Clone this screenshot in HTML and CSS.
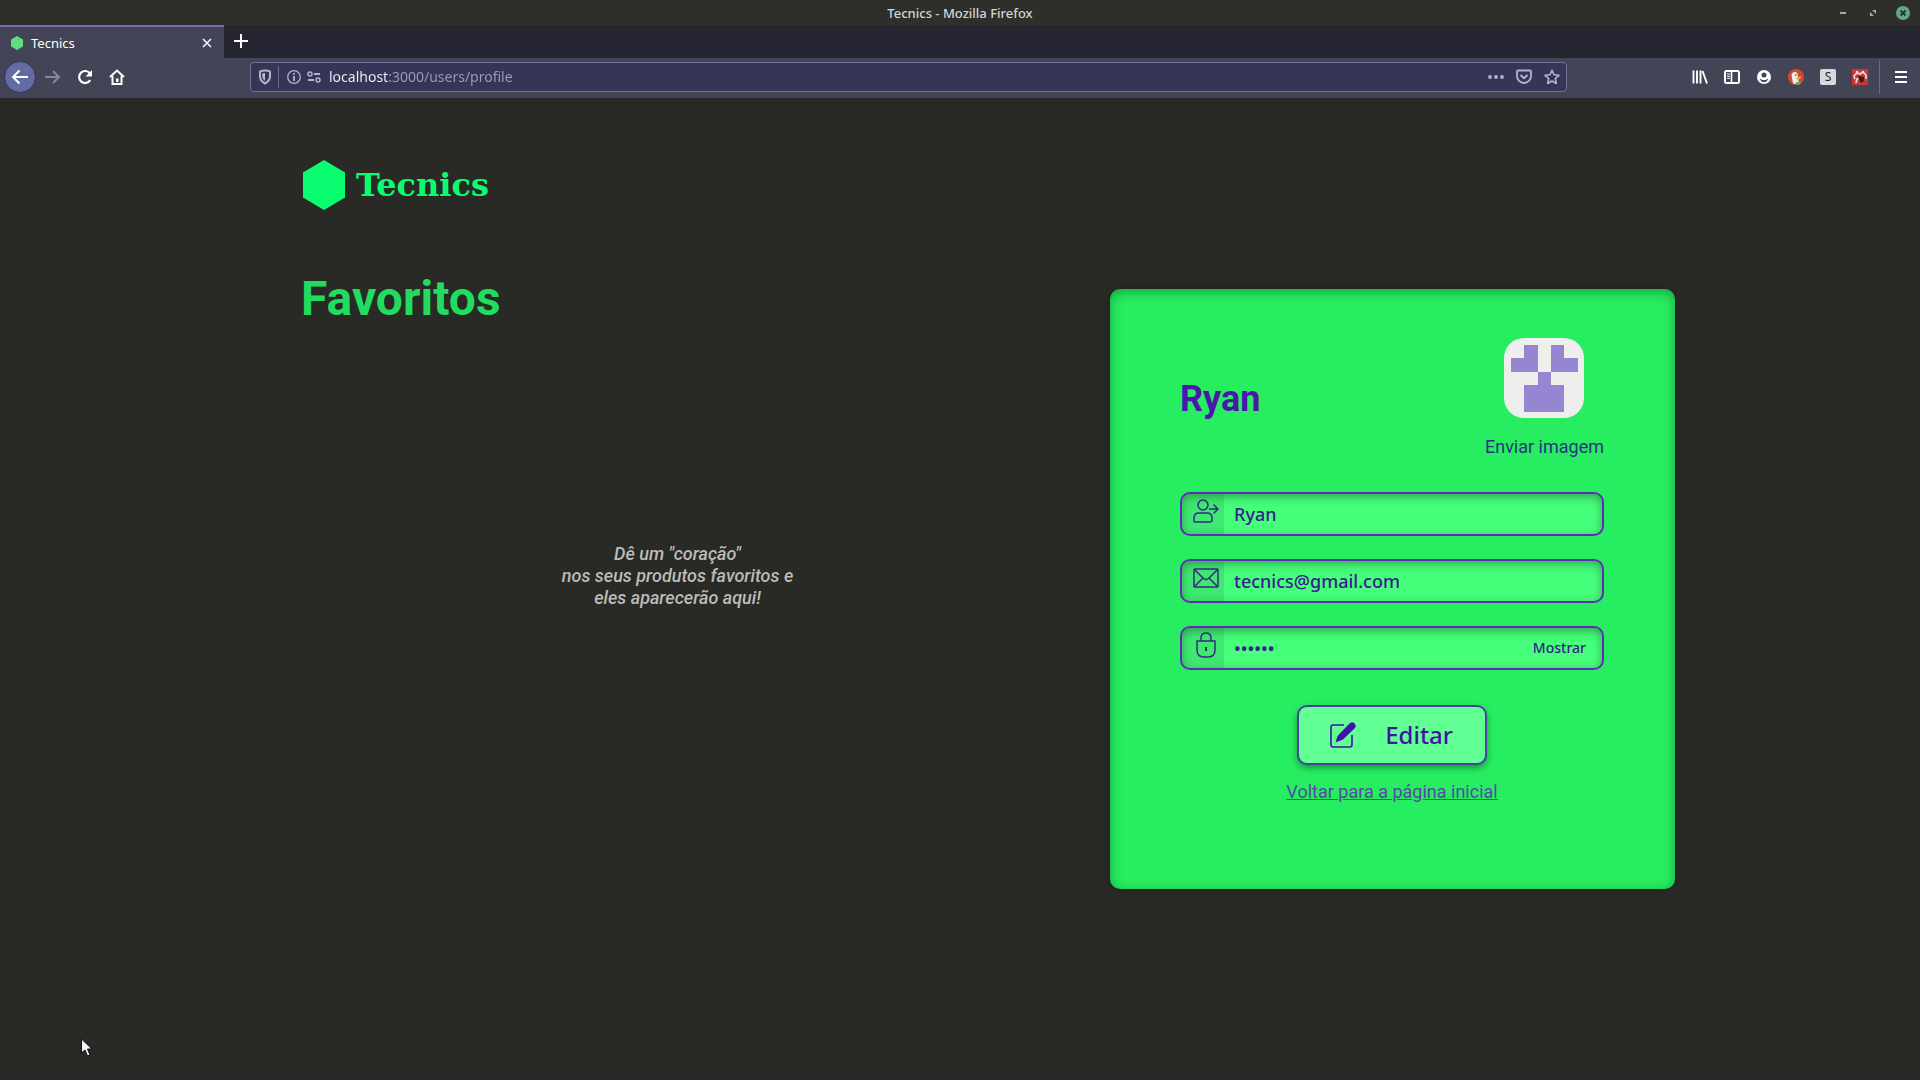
FILE: index.html
```html
<!DOCTYPE html>
<html lang="pt-BR">
<head>
<meta charset="utf-8">
<meta name="viewport" content="width=device-width, initial-scale=1">
<title>Tecnics</title>
<link rel="stylesheet" href="styles.css">
</head>
<body>
<div class="titlebar">
  <span class="window-title">Tecnics - Mozilla Firefox</span>
  <div class="window-buttons">
    <button type="button" aria-label="Minimizar"><svg width="14" height="14" viewBox="0 0 14 14"><path d="M4 7h6" stroke="#a9a9a4" stroke-width="2"/></svg></button>
    <button type="button" aria-label="Restaurar"><svg width="14" height="14" viewBox="0 0 14 14"><path d="M6 4h4v4zM4 6v4h4z" fill="#a9a9a4"/></svg></button>
    <button type="button" aria-label="Fechar janela"><svg width="14" height="14" viewBox="0 0 14 14"><circle cx="7" cy="7" r="7" fill="#5fa88c"/><path d="M4.500 4.500l5 5m0-5l-5 5" stroke="#26332d" stroke-width="1.800"/></svg></button>
  </div>
</div>
<div class="tabs">
  <div class="tab">
    <svg width="12" height="14" viewBox="0 0 12 14"><path d="M6 0l6 3.500v7L6 14 0 10.500v-7z" fill="#5fdc7f"/></svg>
    <span class="tab-title">Tecnics</span>
    <button type="button" aria-label="Fechar aba"><svg width="12" height="12" viewBox="0 0 12 12"><path d="M2 2l8 8m0-8l-8 8" stroke="#f0f0f5" stroke-width="1.700"/></svg></button>
  </div>
  <button class="new-tab" type="button" aria-label="Nova aba"><svg width="14" height="14" viewBox="0 0 14 14"><path d="M7 0v14M0 7h14" stroke="#fff" stroke-width="2"/></svg></button>
</div>
<nav class="toolbar">
  <div class="history">
    <button class="back" type="button" aria-label="Voltar"><svg width="18" height="16" viewBox="0 0 18 16"><path d="M17 8H2.500M8.500 1.500L2 8l6.500 6.500" fill="none" stroke="#fff" stroke-width="2"/></svg></button>
    <button type="button" aria-label="Avançar"><svg width="16" height="16" viewBox="0 0 16 16"><path d="M0 8h14M8 2l6 6-6 6" fill="none" stroke="#85869b" stroke-width="2"/></svg></button>
    <button type="button" aria-label="Recarregar"><svg width="16" height="16" viewBox="0 0 16 16"><path d="M13.200 11.200A6 6 0 1 1 13 4.500" fill="none" stroke="#fff" stroke-width="2.200"/><path d="M15 1v6.500H8.500z" fill="#fff"/></svg></button>
    <button type="button" aria-label="Página inicial"><svg width="16" height="16" viewBox="0 0 16 16"><path d="M1 8l7-6.500L15 8M3.500 7v8h9V7" fill="none" stroke="#fff" stroke-width="2"/><path d="M7 9.500h2.500V13H7z" fill="#fff"/></svg></button>
  </div>
  <div class="urlbar">
    <svg width="14" height="16" viewBox="0 0 14 16"><path d="M7 1.500c2 0 4 .4 5 1v4.500c0 3.500-2 6-5 7.500-3-1.500-5-4-5-7.500V2.500c1-.6 3-1 5-1z" fill="none" stroke="#b4b4cb" stroke-width="2"/><path d="M7 4v8c-1.500-1-2.800-3-2.800-5V4.500z" fill="#b4b4cb"/></svg>
    <span class="divider"></span>
    <svg width="14" height="14" viewBox="0 0 14 14"><circle cx="7" cy="7" r="6.300" fill="none" stroke="#b4b4cb" stroke-width="1.300"/><path d="M7 6v5M7 3v1.800" stroke="#b4b4cb" stroke-width="1.800"/></svg>
    <svg width="14" height="12" viewBox="0 0 14 12"><circle cx="3" cy="3" r="2" fill="none" stroke="#b4b4cb" stroke-width="1.500"/><path d="M7 3h6M1 9h6" stroke="#b4b4cb" stroke-width="1.800"/><circle cx="11" cy="9" r="2" fill="none" stroke="#b4b4cb" stroke-width="1.500"/></svg>
    <input class="url" type="text" value="localhost:3000/users/profile" aria-label="Endereço">
    <div class="page-actions">
      <svg width="16" height="16" viewBox="0 0 16 16"><g fill="#b4b4cb"><circle cx="2" cy="8" r="1.900"/><circle cx="8" cy="8" r="1.900"/><circle cx="14" cy="8" r="1.900"/></g></svg>
      <svg width="16" height="16" viewBox="0 0 16 16"><path d="M2 1.500h12q1 0 1 1V7a7 7 0 0 1-14 0V2.500q0-1 1-1z" fill="none" stroke="#b4b4cb" stroke-width="1.800"/><path d="M4.500 6L8 9.200 11.500 6" fill="none" stroke="#b4b4cb" stroke-width="2"/></svg>
      <svg width="16" height="16" viewBox="0 0 16 16"><path d="M8 1.300l2 4.500 5 .5-3.700 3.300 1 4.900L8 12l-4.300 2.500 1-4.900L1 6.300l5-.5z" fill="none" stroke="#b4b4cb" stroke-width="1.600" stroke-linejoin="round"/></svg>
    </div>
  </div>
  <div class="addons">
    <svg width="16" height="16" viewBox="0 0 16 16"><path d="M1.500 1.500v13M5 1.500v13M8.500 1.500v13M10.500 2l4.500 12.500" stroke="#fff" stroke-width="1.900" fill="none"/></svg>
    <svg width="16" height="16" viewBox="0 0 16 16"><rect x="1" y="2" width="14" height="12" rx="1.500" fill="none" stroke="#fff" stroke-width="2"/><path d="M7.500 2v12" stroke="#fff" stroke-width="1.600"/><path d="M3 5h3M3 7.200h3M3 9.400h3" stroke="#fff"/></svg>
    <svg width="16" height="16" viewBox="0 0 16 16"><circle cx="8" cy="8" r="7" fill="#fff"/><circle cx="8" cy="6" r="2.500" fill="#434456"/><path d="M3.500 9.200q4.500 4 9 0-1.500 4-4.500 4t-4.500-4z" fill="#434456"/></svg>
    <svg width="16" height="16" viewBox="0 0 16 16"><circle cx="8" cy="8" r="8" fill="#cf4a31"/><path d="M5 14.500L3.500 6C4 2.500 8 2 9.500 4.500L10 8l1 7z" fill="#efece8"/><circle cx="7.800" cy="6" r=".8" fill="#333"/><path d="M8.500 8.200L13 7.500v1.200L9.500 10l3 .8-3.500.6z" fill="#f1b432"/><path d="M8 13l5 .5-1 2-4 .4z" fill="#63ad4c"/></svg>
    <span class="addon-s">S</span>
    <svg width="16" height="16" viewBox="0 0 16 16"><rect width="16" height="16" fill="#c93636"/><path d="M3 10l-1-3 3-3 3 1 3-2 3 3v4M4 14l1-4 4-1" fill="none" stroke="#f3dede" stroke-width="1.600"/><path d="M6 7l6 1v4l-3 2-2-3z" fill="#3c1b22"/><circle cx="5" cy="3" r="1.300" fill="#f3dede"/><circle cx="11" cy="3" r="1.300" fill="#f3dede"/></svg>
  </div>
  <button class="menu" type="button" aria-label="Menu"><svg width="12" height="14" viewBox="0 0 12 14"><path d="M0 2h12M0 7h12M0 12h12" stroke="#fff" stroke-width="2"/></svg></button>
</nav>

<main class="page">
  <header>
    <a class="brand" href="#">
      <svg width="42" height="50" viewBox="0 0 42 50"><path d="M21 0l21 12.500v25L21 50 0 37.500v-25z" fill="#0afc71"/></svg>
      <span>Tecnics</span>
    </a>
  </header>
  <div class="columns">
    <section class="favorites">
      <h1>Favoritos</h1>
      <p>Dê um "coração"<br>nos seus produtos favoritos e<br>eles aparecerão aqui!</p>
    </section>
    <form class="card">
      <div class="profile">
        <h2>Ryan</h2>
        <div class="avatar">
          <svg width="80" height="80" viewBox="0 0 80 80"><rect width="80" height="80" rx="20" fill="#eeeeed"/><path d="M20 7h14v27H7V20h13zM47 7h13v13h14v14H47zM34 34h13v13h13v27H20V47h14z" fill="#9686d1"/></svg>
          <button type="button">Enviar imagem</button>
        </div>
      </div>
      <div class="fields">
        <label class="field">
          <span class="field-icon"><svg width="26" height="26" viewBox="0 0 26 26"><circle cx="10" cy="7" r="5"/><path d="M1 24v-4q0-5 5-5h8q5 0 5 5v2q0 2-2 2H1M16 11h9M20.500 6.500L25 11l-4.500 4.500"/></svg></span>
          <input type="text" value="Ryan" aria-label="Nome">
        </label>
        <label class="field">
          <span class="field-icon"><svg width="26" height="26" viewBox="0 0 26 26"><rect x="1" y="4" width="24" height="18" rx="1"/><path d="M1 4l9 9q3 3 6 0l9-9M1 22l9-9m15 9l-9-9"/></svg></span>
          <input type="email" value="tecnics@gmail.com" aria-label="E-mail">
        </label>
        <label class="field">
          <span class="field-icon"><svg width="26" height="26" viewBox="0 0 26 26"><path d="M4 9h18v9q0 7-7 7h-4q-7 0-7-7zM8 9V6q0-5 5-5t5 5v3"/><path d="M13 15v4" stroke-width="2"/></svg></span>
          <input type="password" value="secret" aria-label="Senha">
          <button type="button">Mostrar</button>
        </label>
      </div>
      <button class="edit" type="button">
        <svg width="26" height="26" viewBox="0 0 26 26"><path d="M14 3H3Q1 3 1 5v18q0 2 2 2h17q2 0 2-2V13" fill="none" stroke="#3f149c" stroke-width="1.600"/><path d="M5.500 20.500l2-6.500L19 2q3-3 5.500-.5t0 5L13 17.500z" fill="#4011ae"/></svg>
        <span>Editar</span>
      </button>
      <a class="home-link" href="#">Voltar para a página inicial</a>
    </form>
  </div>
  <svg class="cursor" width="12" height="20" viewBox="0 0 12 20"><path d="M.5 1v14l3.500-3 2.500 6 2.500-1-2.500-6H11z" fill="#f4f4f8" stroke="#111" stroke-width="1"/></svg>
</main>
</body>
</html>
```
FILE: styles.css
```css
* { box-sizing: border-box; }

body {
  margin: 0;
  min-height: 100vh;
  display: flex;
  flex-direction: column;
  background: #292926;
  color: #fff;
  font-family: Roboto, sans-serif;
}

button {
  border: 0;
  padding: 0;
  background: none;
  color: inherit;
  font: inherit;
}

svg { display: block; flex: none; }

h1, h2, p { margin: 0; }

/* Browser window */
.titlebar,
.tabs,
.toolbar { font-family: "Noto Sans", sans-serif; }

.titlebar {
  display: grid;
  grid-template-columns: 1fr auto 1fr;
  align-items: center;
  height: 25px;
  background: #2e2e2b;
}

.window-title {
  grid-column: 2;
  color: #d4d4d0;
  font-size: 13px;
  font-weight: 500;
}

.window-buttons {
  display: flex;
  justify-content: flex-end;
  gap: 16px;
  padding-right: 10px;
}

.tabs {
  display: flex;
  height: 33px;
  background: #262632;
}

.tab {
  display: flex;
  align-items: center;
  gap: 8px;
  width: 224px;
  padding: 0 11px;
  border-top: 2px solid #8068a8;
  background: #434456;
  font-size: 13px;
}

.tab-title { flex: 1; }

.new-tab { padding: 0 10px 2px; }

.toolbar {
  display: flex;
  align-items: center;
  height: 40px;
  padding-bottom: 2px;
  background: #434456;
}

.history {
  display: flex;
  align-items: center;
  gap: 16px;
  width: 250px;
  padding-left: 4px;
}

.history .back {
  display: grid;
  place-items: center;
  width: 32px;
  height: 32px;
  margin-right: -7px;
  border: 1px solid #30325a;
  border-radius: 50%;
  background: #636ba2;
}

.urlbar {
  display: flex;
  align-items: center;
  flex: 1;
  gap: 6px;
  height: 30px;
  padding: 0 6px 0 7px;
  border: 1px solid #71719a;
  border-radius: 4px;
  background: #373557;
}

.divider {
  width: 1px;
  height: 22px;
  margin-right: 2px;
  background: #6b6b8c;
}

.url {
  flex: 1;
  min-width: 0;
  border: 0;
  padding: 0 0 0 2px;
  background: linear-gradient(90deg, #f4f4f8 62px, #9c9cb4 62px);
  background-clip: text;
  -webkit-text-fill-color: transparent;
  font: 14px/20px "Noto Sans", sans-serif;
}

.page-actions { display: flex; gap: 12px; }

.addons {
  display: flex;
  justify-content: flex-end;
  gap: 16px;
  width: 312px;
  padding-right: 11px;
}

.addon-s {
  width: 16px;
  height: 16px;
  border-radius: 2px;
  background: #d5dbdc;
  color: #222;
  font-size: 12px;
  line-height: 16px;
  text-align: center;
}

.menu {
  width: 41px;
  height: 34px;
  padding-left: 15px;
  border-left: 1px solid #6b6b80;
}

/* Profile page */
.page {
  flex: 1;
  padding: 62px 245px 32px 301px;
}

.brand {
  display: inline-flex;
  align-items: center;
  gap: 11px;
  margin-left: 2px;
  color: #0afc71;
  font: bold 32px/50px "DejaVu Serif", serif;
  text-decoration: none;
}

.columns {
  display: grid;
  grid-template-columns: minmax(0, 753fr) minmax(0, 565fr);
  gap: 56px;
  margin-top: 55px;
}

.favorites h1 {
  color: #21dc5e;
  font-size: 48px;
  line-height: 60px;
}

.favorites p {
  margin-top: 214px;
  color: #bcbcb8;
  font-size: 18px;
  font-style: italic;
  font-weight: 500;
  line-height: 22px;
  text-align: center;
}

.card {
  display: flex;
  flex-direction: column;
  align-items: center;
  min-height: 600px;
  margin-top: 20px;
  padding: 49px 71px 49px 70px;
  border-radius: 10px;
  background: #27ed61;
  box-shadow: inset 0 3px 12px rgba(0, 70, 20, .45), 0 0 10px rgba(0, 0, 0, .2);
}

.profile {
  display: flex;
  justify-content: space-between;
  width: 100%;
}

.profile h2 {
  margin-top: 37px;
  color: #4b16ac;
  font-size: 36px;
  line-height: 48px;
}

.avatar {
  display: flex;
  flex-direction: column;
  align-items: center;
  gap: 18px;
}

.avatar button {
  color: #283480;
  font-size: 18px;
  line-height: 22px;
}

.fields {
  display: grid;
  gap: 23px;
  width: 100%;
  margin-top: 34px;
}

.field {
  display: flex;
  height: 44px;
  overflow: hidden;
  border: 2px solid #612bba;
  border-radius: 10px;
  background: #46ff7b;
  box-shadow: inset 0 3px 10px rgba(20, 90, 40, .5);
  color: #38208c;
}

.field-icon {
  width: 42px;
  padding: 4px 0 0 11px;
  background: rgba(30, 110, 60, .15);
}

.field-icon svg {
  fill: none;
  stroke: #352b7f;
  stroke-width: 1.5;
}

.field input {
  flex: 1;
  min-width: 0;
  border: 0;
  padding: 0 10px;
  background: none;
  color: inherit;
  font: 500 18px/24px "Noto Sans", sans-serif;
}

.field button {
  padding-right: 16px;
  font: 500 14px/20px "Noto Sans", sans-serif;
}

.edit {
  display: flex;
  align-items: center;
  justify-content: space-between;
  width: 190px;
  height: 60px;
  margin-top: 35px;
  padding: 0 32px 0 31px;
  border: 2px solid #4b3fa0;
  border-radius: 10px;
  background: #62ff95;
  box-shadow: 0 3px 6px rgba(0, 70, 20, .5);
  color: #4114a6;
  font: 500 24px/32px "Noto Sans", sans-serif;
}

.home-link {
  margin-top: 15px;
  color: #534aa5;
  font-size: 18px;
  line-height: 24px;
}

.cursor {
  position: absolute;
  left: 81px;
  top: 1038px;
}
```
